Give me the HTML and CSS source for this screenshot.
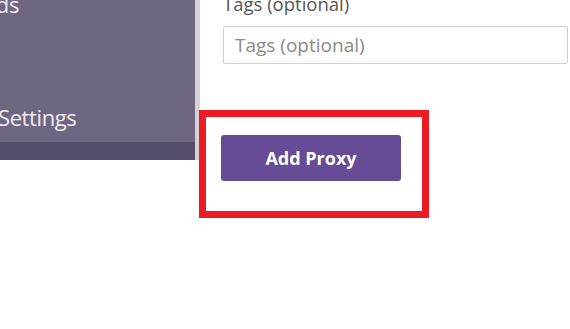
FILE: index.html
```html
<!DOCTYPE html>
<html>
<head>
<meta charset="utf-8">
<link rel="stylesheet" href="styles.css">
</head>
<body>
<div class="page">
  <nav class="sidebar">
    <div class="nav-list">
      <div class="nav-item nav-clipped"><span>Downloads</span></div>
      <div class="nav-item nav-settings"><span>Settings</span></div>
    </div>
    <div class="nav-footer"></div>
  </nav>
  <div class="divider"></div>
  <main class="main">
    <label class="field-label" for="tags">Tags (optional)</label>
    <input class="field-input" id="tags" type="text" placeholder="Tags (optional)">
    <div class="highlight">
      <button class="btn-primary" type="button">Add Proxy</button>
    </div>
  </main>
</div>
</body>
</html>
```
FILE: styles.css
```css
html, body {
  margin: 0;
  padding: 0;
  background: #ffffff;
  overflow: hidden;
}
body {
  font-family: "Open Sans", "Liberation Sans", sans-serif;
  width: 570px;
  height: 329px;
}
.page {
  display: flex;
  align-items: flex-start;
}
.sidebar {
  width: 195px;
  height: 160px;
  display: flex;
  flex-direction: column;
  background: #6f6782;
  overflow: hidden;
  flex-shrink: 0;
}
.nav-list {
  flex: 1;
  display: flex;
  flex-direction: column;
}
.nav-item {
  display: flex;
  color: #eeecf2;
  font-size: 22px;
  line-height: 26px;
  letter-spacing: -0.4px;
  white-space: nowrap;
}
.nav-clipped {
  width: 19px;
  justify-content: flex-end;
  margin-top: -9px;
}
.nav-settings {
  margin-top: 87px;
  margin-left: -2px;
}
.nav-footer {
  height: 18px;
  background: #574e6d;
}
.divider {
  width: 5px;
  height: 160px;
  background: #d4d4d6;
  flex-shrink: 0;
}
.main {
  padding-left: 23px;
  display: flex;
  flex-direction: column;
  align-items: flex-start;
}
.field-label {
  color: #555555;
  font-size: 18.5px;
  line-height: 22px;
  margin-top: -7px;
}
.field-input {
  box-sizing: border-box;
  width: 345px;
  height: 38px;
  margin-top: 11px;
  border: 1px solid #cfcfcf;
  border-radius: 2px;
  padding: 0 11px;
  font-family: inherit;
  font-size: 19px;
  color: #555;
  outline: none;
}
.field-input::placeholder {
  color: #8a8a8a;
}
.highlight {
  margin-top: 46px;
  margin-left: -24px;
  border: 7px solid #ed1c24;
  padding: 18px 21px 30px 15px;
}
.btn-primary {
  display: block;
  width: 180px;
  height: 46px;
  background: #664b97;
  color: #ffffff;
  border: none;
  border-radius: 3px;
  font-family: inherit;
  font-weight: 700;
  font-size: 18px;
  cursor: pointer;
}
```
